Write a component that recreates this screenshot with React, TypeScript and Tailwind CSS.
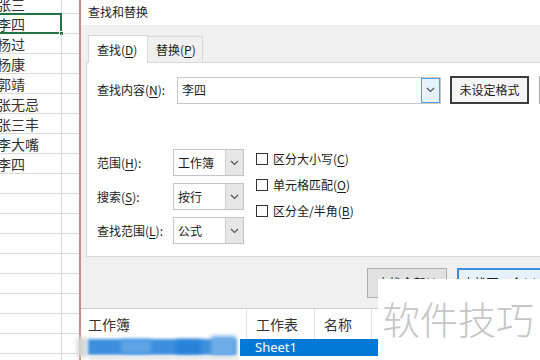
import React from "react";

const names = ["张三", "李四", "杨过", "杨康", "郭靖", "张无忌", "张三丰", "李大嘴", "李四"];

const Chevron = () => (
  <svg width="9" height="6" viewBox="0 0 9 6" fill="none">
    <path d="M1 1l3.5 3.5L8 1" stroke="#555" strokeWidth="1.2" />
  </svg>
);

const Key = ({ k }: { k: string }) => (
  <>
    (<span className="underline underline-offset-2">{k}</span>)
  </>
);

const Sheet = () => {
  const rows = Array.from({ length: 19 }, (_, i) => names[i] ?? "");
  return (
    <div className="w-[79px] shrink-0 flex flex-col -mt-[6px]">
      {rows.map((n, i) => (
        <div key={i} className="flex h-[20px] shrink-0 border-b border-[#dadada]">
          <div className="relative w-[62px] border-r border-[#dadada] flex items-center">
            <span className="-ml-[3px] text-[14px] leading-none text-[#333] whitespace-nowrap">{n}</span>
            {i === 1 && (
              <>
                <div className="absolute -left-[2px] -top-[1px] w-[64px] h-[21px] border-2 border-[#217346]" />
                <div className="absolute -right-[3px] -bottom-[3px] w-[5px] h-[5px] bg-[#217346] border border-white" />
              </>
            )}
          </div>
          <div className="flex-1" />
        </div>
      ))}
    </div>
  );
};

const Select = ({ value }: { value: string }) => (
  <div className="flex shrink-0 w-[71px] h-[27px] border border-[#c4c4c4] bg-white">
    <div className="flex-1 flex items-center pl-[4px] text-[12px] text-[#1a1a1a]">{value}</div>
    <div className="w-[18px] bg-[#e6e6e6] border-l border-[#d0d0d0] flex items-center justify-center">
      <Chevron />
    </div>
  </div>
);

const Check = ({ children }: { children: React.ReactNode }) => (
  <div className="flex items-center h-[26px] gap-[5px] whitespace-nowrap">
    <div className="w-[12px] h-[12px] border border-[#333] bg-white shrink-0" />
    <span className="text-[12px] text-[#1a1a1a] leading-none">{children}</span>
  </div>
);

const Dialog = () => (
  <div className="flex-1 flex flex-col border-l-2 border-[#c98e82] bg-[#f0f0f0] min-w-0">
    <div className="h-[25px] bg-white flex items-center pl-[7px] text-[12px] text-[#222]">查找和替换</div>
    <div className="h-[38px] flex items-end pl-[7px] whitespace-nowrap">
      <div className="h-[28px] w-[60px] shrink-0 bg-white border border-b-0 border-[#d9d9d9] flex items-center pl-[8px] text-[12px] text-[#1a1a1a] relative z-10 -mb-px">
        查找<Key k="D" />
      </div>
      <div className="h-[26px] w-[55px] shrink-0 bg-[#f0f0f0] border border-l-0 border-b-0 border-[#d9d9d9] flex items-center pl-[8px] text-[12px] text-[#1a1a1a]">
        替换<Key k="P" />
      </div>
    </div>
    <div className="ml-[5px] bg-white border border-r-0 border-[#d9d9d9] flex flex-col pl-[10px] pt-[13px] pb-[12px] whitespace-nowrap">
      <div className="flex items-center">
        <div className="w-[80px] shrink-0 text-[12px] text-[#1a1a1a]">查找内容<Key k="N" />:</div>
        <div className="w-[264px] shrink-0 h-[27px] border border-[#c8c8c8] flex">
          <div className="flex-1 flex items-center pl-[4px] text-[12px] text-[#1a1a1a]">李四</div>
          <div className="w-[19px] bg-[#e5f1fb] border border-[#5a9fe6] flex items-center justify-center">
            <Chevron />
          </div>
        </div>
        <div className="ml-[9px] w-[79px] shrink-0 h-[28px] border-2 border-[#3c3c3c] bg-[#f5f5f5] flex items-center justify-center text-[12px] text-[#1a1a1a]">
          未设定格式
        </div>
        <div className="ml-[10px] w-[80px] h-[28px] border border-[#adadad] bg-[#e1e1e1] shrink-0" />
      </div>
      <div className="flex items-start mt-[45px]">
        <div className="flex flex-col gap-[7px]">
          {[
            ["范围", "H", "工作簿"],
            ["搜索", "S", "按行"],
            ["查找范围", "L", "公式"],
          ].map(([l, k, v]) => (
            <div key={k} className="flex items-center">
              <div className="w-[76px] shrink-0 text-[12px] text-[#1a1a1a]">
                {l}
                <Key k={k} />:
              </div>
              <Select value={v} />
            </div>
          ))}
        </div>
        <div className="ml-[12px] -mt-[3px] flex flex-col">
          <Check>区分大小写<Key k="C" /></Check>
          <Check>单元格匹配<Key k="O" /></Check>
          <Check>区分全/半角<Key k="B" /></Check>
        </div>
      </div>
    </div>
    <div className="h-[51px] flex items-center pl-[286px] gap-[10px] whitespace-nowrap">
      <div className="w-[80px] h-[30px] shrink-0 border border-[#adadad] bg-[#e1e1e1] flex items-center justify-center text-[12px] text-[#1a1a1a]">
        查找全部<Key k="I" />
      </div>
      <div className="w-[86px] h-[30px] shrink-0 border-2 border-[#3a8ee6] bg-[#e5f1fb] flex items-center justify-center text-[12px] text-[#1a1a1a]">
        查找下一个<Key k="F" />
      </div>
    </div>
    <div className="flex-1 bg-white border-t border-[#cfcfcf] flex flex-col">
      <div className="h-[30px] flex text-[14px] text-[#333] whitespace-nowrap">
        <div className="w-[166px] shrink-0 pl-[7px] flex items-center border-r border-[#e2e2e2]">工作簿</div>
        <div className="w-[68px] shrink-0 pl-[9px] flex items-center border-r border-[#e2e2e2]">工作表</div>
        <div className="w-[57px] shrink-0 pl-[9px] flex items-center border-r border-[#e2e2e2]">名称</div>
        <div className="pl-[7px] flex items-center">单元格</div>
      </div>
      <div className="h-[17px] flex">
        <div className="w-[159px] shrink-0 relative">
          <div className="absolute left-[-4px] top-[-2px] w-[10px] h-[20px] bg-[#d6d6d6] blur-[2px]" />
          <div className="absolute left-[7px] top-[0px] w-[148px] h-[16px] bg-[#3d8fdc] blur-[1.5px]" />
          <div className="absolute left-[40px] top-[1px] w-[30px] h-[14px] bg-[#5ea4e6] blur-[2px]" />
          <div className="absolute left-[95px] top-[1px] w-[25px] h-[14px] bg-[#2a82d8] blur-[2px]" />
          <div className="absolute left-[130px] top-[-3px] w-[25px] h-[20px] bg-[#6eaee8] blur-[2px]" />
        </div>
        <div className="flex-1 bg-[#0078d7] flex items-center pl-[15px] text-[13px] text-white font-['Noto_Sans',sans-serif]">
          Sheet1
        </div>
      </div>
      <div className="flex-1 flex">
        <div className="w-[150px] ml-[8px] h-[4px] bg-[#e8e8e8] blur-[1px]" />
      </div>
    </div>
  </div>
);

export default function App() {
  return (
    <div className="relative w-[540px] h-[360px] overflow-hidden bg-white flex font-['Noto_Sans_CJK_SC','Noto_Sans',sans-serif]">
      <Sheet />
      <Dialog />
      <div className="absolute left-[378px] top-[279px] w-[162px] h-[81px] bg-white flex items-start pl-[4px] pt-[20px]">
        <span className="text-[38px] leading-none font-light text-[#c6c6c6] whitespace-nowrap">软件技巧</span>
      </div>
    </div>
  );
}
